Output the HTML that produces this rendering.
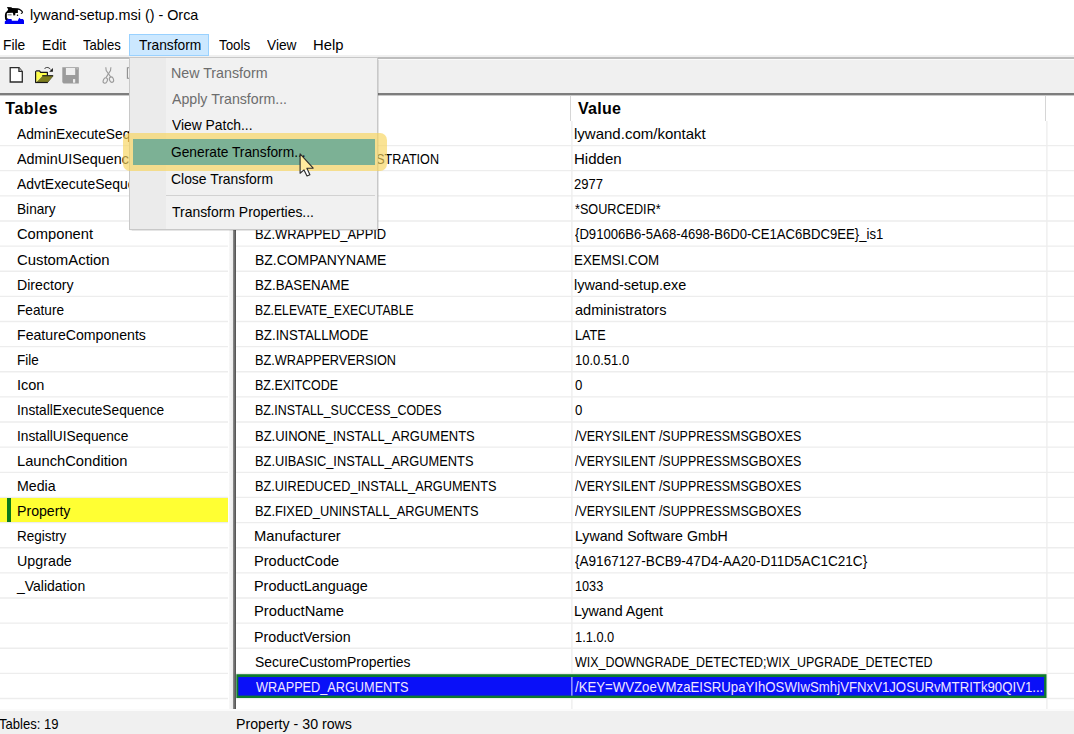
<!DOCTYPE html>
<html><head><meta charset="utf-8"><title>lywand-setup.msi () - Orca</title>
<style>
html,body{margin:0;padding:0;}
body{width:1074px;height:734px;overflow:hidden;background:#fff;position:relative;font-family:"Liberation Sans",sans-serif;font-size:14.5px;color:#000;}
.abs{position:absolute;}
.t{position:absolute;white-space:nowrap;line-height:16px;height:16px;transform-origin:0 50%;}
.hline{position:absolute;height:1px;background:#ececec;}
.vline{position:absolute;width:1px;background:#ececec;}
.hd{position:absolute;font-weight:bold;font-size:16px;line-height:18px;white-space:nowrap;letter-spacing:0.25px;}
.dis{color:#6d6d6d;}
</style></head><body>

<div class="abs" style="left:0;top:0;width:1074px;height:33px;background:#fff"></div>
<svg class="abs" style="left:0;top:0" width="30" height="30" viewBox="0 0 30 30">
<path d="M4.8,23.9 L4.8,21.4 L7.4,19.1 L11.5,19.1 L11.9,20.7 L17.9,20.7 L18.5,19 L19.5,17.7 L20.5,18.9 L22.9,19.1 L24,20.6 L24,23.9 Z" fill="#0000f6"/>
<path d="M6.9,6.9 L11.4,7.3 L12.1,7.9 L17.9,8.2 C20.2,8.6 22.6,10.5 22.9,11.8 L22.9,12.8 L21.8,13.9 L20.4,13.5 L21.6,12.9 L21.7,12 C21,10.8 19.5,9.9 17.9,9.7 L17.9,13 L15.4,13 L15.2,15.2 L13.4,15.4 L13,13.2 L12.6,12.7 L7.3,13 L6.8,13.7 L6.9,18.4 L8.5,18.3 L7.6,19.2 L6.4,20.4 L5.2,19.6 C4.7,16.5 4.8,14 5.6,12.6 L7.2,11 L8.2,9.4 Z" fill="#000"/>
<rect x="7.6" y="14.2" width="4" height="1.2" fill="#7a7a7a"/>
<circle cx="17.5" cy="15.3" r="0.75" fill="#000"/>
</svg>
<div class="t" style="left:30.30px;top:7.00px;transform:scaleX(0.9900);">lywand-setup.msi () - Orca</div>
<div class="t" style="left:3.42px;top:37.00px;transform:scaleX(0.9518);">File</div>
<div class="t" style="left:41.80px;top:37.00px;transform:scaleX(0.9706);">Edit</div>
<div class="t" style="left:83.30px;top:37.00px;transform:scaleX(0.9022);">Tables</div>
<div class="t" style="left:219.09px;top:37.00px;transform:scaleX(0.9195);">Tools</div>
<div class="t" style="left:267.30px;top:37.00px;transform:scaleX(0.9476);">View</div>
<div class="t" style="left:313.34px;top:37.00px;transform:scaleX(1.0213);">Help</div>
<div class="abs" style="left:0;top:55px;width:1074px;height:38px;background:#f0f0f0"></div>
<div class="abs" style="left:0;top:57px;width:1074px;height:2px;background:#bdbdbd"></div>
<div class="abs" style="left:0;top:59px;width:1074px;height:1px;background:#fafafa"></div>
<div class="abs" style="left:0;top:93px;width:1074px;height:2px;background:#7d7d7d"></div>
<div class="abs" style="left:0;top:95px;width:1074px;height:1px;background:#c9c9c9"></div>
<svg class="abs" style="left:0;top:60px" width="130" height="30" viewBox="0 60 130 30">
<!-- new -->
<path d="M10.2,67.6 L18.9,67.6 L22.3,71.4 L22.3,82 L10.2,82 Z" fill="#fff" stroke="#2b2b2b" stroke-width="1.3" stroke-linejoin="miter"/>
<path d="M18.9,67.6 L18.9,71.5 L22.3,71.5" fill="#b5b5b5" stroke="#2b2b2b" stroke-width="1.2" stroke-linejoin="miter"/>
<!-- open -->
<path d="M36.1,82 L36.1,71.7 L39.5,71.7 L40.3,73 L46.9,73 L46.9,75.4 L42.6,75.4 Z" fill="#ffff4a"/>
<path d="M36.3,82.2 L42.7,75.8 L53,75.8 L47.7,82.2 Z" fill="#7d7d1c"/>
<path d="M35.6,82.6 L35.6,71.6 L36.5,70.9 L39.5,70.9 L40.6,72.4 L47.4,72.4 L47.4,75.4" fill="none" stroke="#161616" stroke-width="1.2" stroke-linejoin="round"/>
<path d="M42.2,75.7 L53.2,75.7" fill="none" stroke="#161616" stroke-width="1.1"/>
<path d="M35.2,82.5 L47.9,82.5" fill="none" stroke="#161616" stroke-width="1.2"/>
<path d="M53,76 L47.7,82.4" fill="none" stroke="#4a4a18" stroke-width="0.8"/>
<path d="M44.5,68.9 C45.6,67 48.6,66.8 50.6,69.4" fill="none" stroke="#333" stroke-width="1"/>
<path d="M52.9,67.9 L52.9,71.8 L49.2,71.8 Z" fill="#161616"/>
<!-- save (disabled) -->
<path d="M62.3,67.2 L78.8,67.2 L78.8,83.6 L63.6,83.6 L62.3,82.3 Z" fill="#9b9b9b"/>
<rect x="65.9" y="68" width="9.3" height="7" fill="#eeeeee"/>
<rect x="73" y="79.1" width="2.2" height="3.6" fill="#eeeeee"/>
<rect x="76.6" y="68.2" width="1" height="1.2" fill="#d8d8d8"/>
<!-- cut (disabled) -->
<g fill="none" stroke="#9b9b9b" stroke-width="1.1">
<path d="M105.8,67.2 L106.2,70.6 L111,77.4"/>
<path d="M110.9,67.2 L110.5,70.6 L106,77.6"/>
<ellipse cx="105.3" cy="80.5" rx="2" ry="2.8" transform="rotate(25 105.3 80.5)"/>
<ellipse cx="111.5" cy="79.6" rx="2" ry="2.8" transform="rotate(-20 111.5 79.6)"/>
</g>
<!-- copy (partially visible) -->
<path d="M130,67.7 L127.4,67.7 L127.4,78.2 L130,78.2" fill="none" stroke="#8c8c8c" stroke-width="1.1"/>
</svg>
<div class="abs" style="left:129px;top:33.5px;width:80px;height:22.5px;background:#cce8ff;border:1px solid #99d1ff;box-sizing:border-box"></div>
<div class="t" style="left:138.78px;top:37.00px;transform:scaleX(0.9512);">Transform</div>
<svg class="abs" style="left:0;top:96px" width="1074" height="614" viewBox="0 96 1074 614"><g stroke="#ededed" stroke-width="1.35" fill="none"><path d="M0,145.55 H228 M236,145.55 H1074"/><path d="M0,170.69 H228 M236,170.69 H1074"/><path d="M0,195.82 H228 M236,195.82 H1074"/><path d="M0,220.96 H228 M236,220.96 H1074"/><path d="M0,246.09 H228 M236,246.09 H1074"/><path d="M0,271.23 H228 M236,271.23 H1074"/><path d="M0,296.36 H228 M236,296.36 H1074"/><path d="M0,321.50 H228 M236,321.50 H1074"/><path d="M0,346.63 H228 M236,346.63 H1074"/><path d="M0,371.76 H228 M236,371.76 H1074"/><path d="M0,396.90 H228 M236,396.90 H1074"/><path d="M0,422.04 H228 M236,422.04 H1074"/><path d="M0,447.17 H228 M236,447.17 H1074"/><path d="M0,472.31 H228 M236,472.31 H1074"/><path d="M0,497.44 H228 M236,497.44 H1074"/><path d="M0,522.58 H228 M236,522.58 H1074"/><path d="M0,547.71 H228 M236,547.71 H1074"/><path d="M0,572.85 H228 M236,572.85 H1074"/><path d="M0,597.98 H228 M236,597.98 H1074"/><path d="M0,623.12 H228 M236,623.12 H1074"/><path d="M0,648.25 H228 M236,648.25 H1074"/><path d="M0,673.38 H228 M236,673.38 H1074"/><path d="M0,698.52 H228 M236,698.52 H1074"/><path d="M571.9,121 V709.5 M1046.9,121 V709.5"/></g></svg>
<div class="hd" style="left:5.3px;top:99.5px;letter-spacing:0.5px">Tables</div>
<div class="t" style="left:17.00px;top:125.92px;transform:scaleX(0.9500);">AdminExecuteSequence</div>
<div class="t" style="left:17.00px;top:151.06px;transform:scaleX(0.9920);">AdminUISequence</div>
<div class="t" style="left:17.00px;top:176.19px;transform:scaleX(0.9600);">AdvtExecuteSequence</div>
<div class="t" style="left:17.43px;top:201.32px;transform:scaleX(0.9408);">Binary</div>
<div class="t" style="left:16.81px;top:226.46px;transform:scaleX(1.0143);">Component</div>
<div class="t" style="left:16.80px;top:251.60px;transform:scaleX(1.0263);">CustomAction</div>
<div class="t" style="left:17.40px;top:276.73px;transform:scaleX(0.9741);">Directory</div>
<div class="t" style="left:17.43px;top:301.87px;transform:scaleX(0.9409);">Feature</div>
<div class="t" style="left:17.39px;top:327.00px;transform:scaleX(0.9755);">FeatureComponents</div>
<div class="t" style="left:17.45px;top:352.13px;transform:scaleX(0.9287);">File</div>
<div class="t" style="left:17.37px;top:377.27px;transform:scaleX(1.0016);">Icon</div>
<div class="t" style="left:17.43px;top:402.41px;transform:scaleX(0.9457);">InstallExecuteSequence</div>
<div class="t" style="left:17.43px;top:427.54px;transform:scaleX(0.9460);">InstallUISequence</div>
<div class="t" style="left:17.35px;top:452.68px;transform:scaleX(1.0141);">LaunchCondition</div>
<div class="t" style="left:17.39px;top:477.81px;transform:scaleX(0.9778);">Media</div>
<div class="abs" style="left:0;top:498px;width:228px;height:24px;background:#ffff33"></div>
<div class="abs" style="left:7px;top:498px;width:4px;height:24px;background:#0b7a1c"></div>
<div class="t" style="left:17.40px;top:502.95px;transform:scaleX(0.9745);">Property</div>
<div class="t" style="left:17.45px;top:528.08px;transform:scaleX(0.9280);">Registry</div>
<div class="t" style="left:16.61px;top:553.22px;transform:scaleX(0.9847);">Upgrade</div>
<div class="t" style="left:17.32px;top:578.35px;transform:scaleX(0.9645);">_Validation</div>
<div class="abs" style="left:229px;top:96px;width:4px;height:613px;background:linear-gradient(90deg,#f7f7f7,#ececec)"></div>
<div class="abs" style="left:233px;top:96px;width:3px;height:613px;background:linear-gradient(90deg,#909090,#4c4c4c)"></div>
<div class="hd" style="left:255px;top:99.5px;">Property</div>
<div class="hd" style="left:578px;top:99.5px;">Value</div>
<div class="vline" style="left:570px;top:96px;height:25px;background:#d6d6d6"></div>
<div class="vline" style="left:1045px;top:96px;height:25px;background:#d6d6d6"></div>
<div class="t" style="left:255.60px;top:125.92px;transform:scaleX(0.8900);">ARPCONTACT</div>
<div class="t" style="left:574.16px;top:125.92px;transform:scaleX(1.0350);">lywand.com/kontakt</div>
<div class="t" style="left:254.61px;top:151.06px;transform:scaleX(0.8696);">BZ.WRAPPED_REGISTRATION</div>
<div class="t" style="left:573.93px;top:151.06px;transform:scaleX(1.0363);">Hidden</div>
<div class="t" style="left:254.59px;top:176.19px;transform:scaleX(0.8900);">BZ.VER</div>
<div class="t" style="left:574.49px;top:176.19px;transform:scaleX(0.9003);">2977</div>
<div class="t" style="left:254.59px;top:201.32px;transform:scaleX(0.8900);">BZ.CURRENTDIR</div>
<div class="t" style="left:574.90px;top:201.32px;transform:scaleX(0.8716);">*SOURCEDIR*</div>
<div class="t" style="left:254.59px;top:226.46px;transform:scaleX(0.8895);">BZ.WRAPPED_APPID</div>
<div class="t" style="left:574.90px;top:226.46px;transform:scaleX(0.9040);">{D91006B6-5A68-4698-B6D0-CE1AC6BDC9EE}_is1</div>
<div class="t" style="left:254.51px;top:251.60px;transform:scaleX(0.9611);">BZ.COMPANYNAME</div>
<div class="t" style="left:574.06px;top:251.60px;transform:scaleX(0.9189);">EXEMSI.COM</div>
<div class="t" style="left:254.56px;top:276.73px;transform:scaleX(0.9152);">BZ.BASENAME</div>
<div class="t" style="left:574.20px;top:276.73px;transform:scaleX(0.9951);">lywand-setup.exe</div>
<div class="t" style="left:254.65px;top:301.87px;transform:scaleX(0.8409);">BZ.ELEVATE_EXECUTABLE</div>
<div class="t" style="left:574.65px;top:301.87px;transform:scaleX(1.0039);">administrators</div>
<div class="t" style="left:254.56px;top:327.00px;transform:scaleX(0.9159);">BZ.INSTALLMODE</div>
<div class="t" style="left:575.11px;top:327.00px;transform:scaleX(0.8730);">LATE</div>
<div class="t" style="left:254.61px;top:352.13px;transform:scaleX(0.8766);">BZ.WRAPPERVERSION</div>
<div class="t" style="left:574.79px;top:352.13px;transform:scaleX(0.8952);">10.0.51.0</div>
<div class="t" style="left:254.63px;top:377.27px;transform:scaleX(0.8595);">BZ.EXITCODE</div>
<div class="t" style="left:575.19px;top:377.27px;transform:scaleX(0.9103);">0</div>
<div class="t" style="left:254.63px;top:402.41px;transform:scaleX(0.8555);">BZ.INSTALL_SUCCESS_CODES</div>
<div class="t" style="left:575.19px;top:402.41px;transform:scaleX(0.9103);">0</div>
<div class="t" style="left:254.59px;top:427.54px;transform:scaleX(0.8952);">BZ.UINONE_INSTALL_ARGUMENTS</div>
<div class="t" style="left:575.10px;top:427.54px;transform:scaleX(0.8579);">/VERYSILENT /SUPPRESSMSGBOXES</div>
<div class="t" style="left:254.60px;top:452.68px;transform:scaleX(0.8840);">BZ.UIBASIC_INSTALL_ARGUMENTS</div>
<div class="t" style="left:575.10px;top:452.68px;transform:scaleX(0.8579);">/VERYSILENT /SUPPRESSMSGBOXES</div>
<div class="t" style="left:254.61px;top:477.81px;transform:scaleX(0.8770);">BZ.UIREDUCED_INSTALL_ARGUMENTS</div>
<div class="t" style="left:575.10px;top:477.81px;transform:scaleX(0.8579);">/VERYSILENT /SUPPRESSMSGBOXES</div>
<div class="t" style="left:254.60px;top:502.95px;transform:scaleX(0.8849);">BZ.FIXED_UNINSTALL_ARGUMENTS</div>
<div class="t" style="left:575.10px;top:502.95px;transform:scaleX(0.8579);">/VERYSILENT /SUPPRESSMSGBOXES</div>
<div class="t" style="left:254.45px;top:528.08px;transform:scaleX(1.0151);">Manufacturer</div>
<div class="t" style="left:574.50px;top:528.08px;transform:scaleX(0.9754);">Lywand Software GmbH</div>
<div class="t" style="left:254.46px;top:553.22px;transform:scaleX(1.0071);">ProductCode</div>
<div class="t" style="left:574.89px;top:553.22px;transform:scaleX(0.9351);">{A9167127-BCB9-47D4-AA20-D11D5AC1C21C}</div>
<div class="t" style="left:254.47px;top:578.35px;transform:scaleX(0.9941);">ProductLanguage</div>
<div class="t" style="left:575.31px;top:578.35px;transform:scaleX(0.8744);">1033</div>
<div class="t" style="left:254.45px;top:603.49px;transform:scaleX(1.0146);">ProductName</div>
<div class="t" style="left:574.49px;top:603.49px;transform:scaleX(0.9825);">Lywand Agent</div>
<div class="t" style="left:254.49px;top:628.62px;transform:scaleX(0.9825);">ProductVersion</div>
<div class="t" style="left:575.30px;top:628.62px;transform:scaleX(0.8845);">1.1.0.0</div>
<div class="t" style="left:255.17px;top:653.75px;transform:scaleX(0.9598);">SecureCustomProperties</div>
<div class="t" style="left:575.10px;top:653.75px;transform:scaleX(0.8584);">WIX_DOWNGRADE_DETECTED;WIX_UPGRADE_DETECTED</div>
<svg class="abs" style="left:230px;top:670px" width="830" height="34" viewBox="230 670 830 34"><rect x="236.3" y="674.2" width="810.2" height="23.8" fill="#0f7a2e"/><rect x="238.3" y="677" width="805.8" height="18.6" fill="#0a10f8"/><rect x="571.4" y="677" width="1" height="18.6" fill="#dfe0ff"/></svg>
<div class="t" style="left:256.10px;top:678.89px;transform:scaleX(0.8765);color:#efe6ff;">WRAPPED_ARGUMENTS</div>
<div class="t" style="left:575.10px;top:678.89px;transform:scaleX(0.9102);color:#efe6ff;">/KEY=WVZoeVMzaEISRUpaYIhOSWIwSmhjVFNxV1JOSURvMTRITk90QIV1...</div>
<div class="abs" style="left:0;top:709px;width:1074px;height:2px;background:#fbfbfb"></div>
<div class="abs" style="left:0;top:711px;width:1074px;height:23px;background:#f0f0f0"></div>
<div class="t" style="left:-1.26px;top:715.70px;transform:scaleX(0.9000);">Tables: 19</div>
<div class="t" style="left:236.19px;top:715.70px;transform:scaleX(0.9789);">Property - 30 rows</div>
<div class="abs" style="left:129px;top:57px;width:249px;height:172.5px;background:#f1f1f1;border:1px solid #c8c8c8;box-sizing:border-box;box-shadow:0.5px 0.5px 1px rgba(0,0,0,0.10)"></div>
<div class="abs" style="left:130px;top:58px;width:36px;height:170.5px;background:#ebebeb;"></div>
<div class="abs" style="left:122.5px;top:132.5px;width:264.5px;height:38px;background:rgba(248,213,92,0.66);border-radius:7px"></div>
<div class="abs" style="left:132.5px;top:139px;width:242.5px;height:26px;background:#7cb195"></div>
<div class="t dis" style="left:170.89px;top:65.00px;transform:scaleX(0.9816);">New Transform</div>
<div class="t dis" style="left:172.00px;top:91.00px;transform:scaleX(0.9777);">Apply Transform...</div>
<div class="t" style="left:172.00px;top:117.40px;transform:scaleX(0.9549);">View Patch...</div>
<div class="t" style="left:171.35px;top:144.00px;transform:scaleX(0.9493);">Generate Transform...</div>
<div class="t" style="left:171.35px;top:170.60px;transform:scaleX(0.9592);">Close Transform</div>
<div class="t" style="left:171.78px;top:204.40px;transform:scaleX(0.9611);">Transform Properties...</div>
<div class="abs" style="left:166px;top:195px;width:208.7px;height:1px;background:#d2d2d2"></div>
<svg class="abs" style="left:298px;top:152px" width="20" height="26" viewBox="0 0 20 26"><defs><linearGradient id="cg" gradientUnits="userSpaceOnUse" x1="0" y1="0" x2="0" y2="26"><stop offset="0.708" stop-color="#ffeb9e"/><stop offset="0.709" stop-color="#ffffff"/></linearGradient></defs><path d="M2.1 1.9 L2.1 21.2 L6 17.9 L9 24 L11.9 22.7 L8.9 16.3 L15.2 16.1 Z" fill="url(#cg)" stroke="#2e2e2e" stroke-width="1.15" stroke-linejoin="round"/></svg>
</body></html>
